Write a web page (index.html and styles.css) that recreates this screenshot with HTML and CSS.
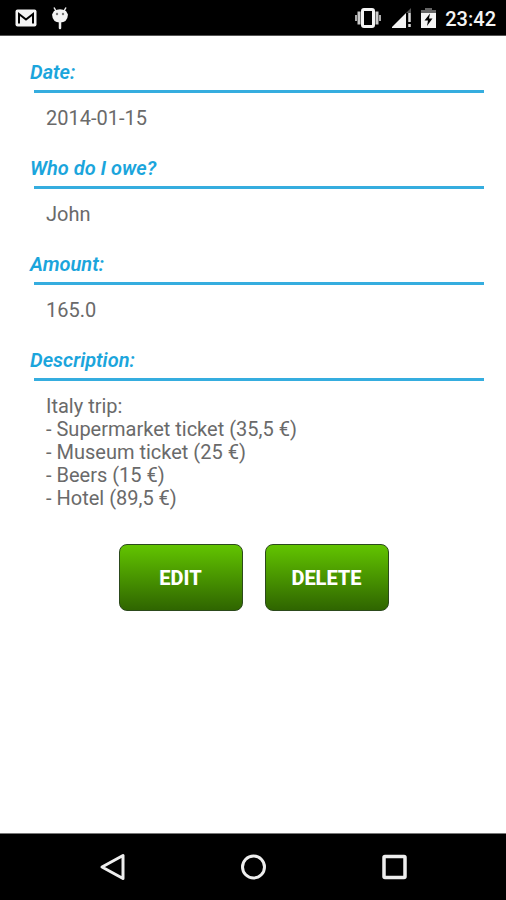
FILE: index.html
```html
<!DOCTYPE html>
<html lang="en">
<head>
<meta charset="utf-8">
<meta name="viewport" content="width=device-width, initial-scale=1">
<title>Debt details</title>
<link rel="stylesheet" href="styles.css">
</head>
<body>
<header class="status-bar">
  <div class="status-group notifications">
    <svg width="22" height="18" viewBox="0 0 22 18" aria-hidden="true">
      <rect x="0.5" y="0.5" width="21" height="17" rx="2" fill="#f4f4f4"/>
      <path d="M4 14.5V5L11 10.5L18 5V14.5" fill="none" stroke="#000" stroke-width="2"/>
    </svg>
    <svg width="18" height="24" viewBox="0 0 18 24" aria-hidden="true">
      <path d="M3 1.500L5 5M15 1.500L13 5" stroke="#eee" stroke-width="1.500"/>
      <path d="M3 5Q9 1.500 15 5L17 8.500Q16.500 16.500 9 16.500Q1.500 16.500 1 8.500Z" fill="#f4f4f4"/>
      <circle cx="6" cy="8" r="1.200" fill="#777"/><circle cx="12" cy="8" r="1.200" fill="#777"/>
      <path d="M9 15V22" stroke="#eee" stroke-width="2.500" stroke-linecap="round"/>
    </svg>
  </div>
  <div class="status-group system">
    <svg width="28" height="22" viewBox="0 0 28 22" aria-hidden="true">
      <rect x="7.500" y="2.500" width="11" height="17" rx="1.500" fill="#000" stroke="#f4f4f4" stroke-width="3"/>
      <path d="M4 4.500V17.500M22 4.500V17.500" stroke="#ccc" stroke-width="3"/>
      <path d="M1 8V14M25 8V14" stroke="#aaa" stroke-width="2"/>
    </svg>
    <svg width="20" height="20" viewBox="0 0 20 20" aria-hidden="true">
      <path d="M14 5V20H-1Z" fill="#f4f4f4"/>
      <path d="M19 0V5H14Z" fill="#555"/>
      <path d="M17.500 5V14M17.500 16V19" stroke="#ddd" stroke-width="2.500"/>
    </svg>
    <svg width="15" height="20" viewBox="0 0 15 20" aria-hidden="true">
      <path d="M0 2H4V0H11V2H15V6H0Z" fill="#666"/>
      <path d="M0 5H15V20H0Z" fill="#f4f4f4"/>
      <path d="M9 5.500L3.500 12.500H7L6 18L11.500 10.500H8Z" fill="#000"/>
    </svg>
    <time class="clock">23:42</time>
  </div>
</header>

<main class="content">
  <dl class="details">
    <dt>Date:</dt>
    <dd>2014-01-15</dd>
    <dt>Who do I owe?</dt>
    <dd>John</dd>
    <dt>Amount:</dt>
    <dd>165.0</dd>
    <dt>Description:</dt>
    <dd>Italy trip:<br>- Supermarket ticket (35,5 €)<br>- Museum ticket (25 €)<br>- Beers (15 €)<br>- Hotel (89,5 €)</dd>
  </dl>
  <div class="actions">
    <button type="button">EDIT</button>
    <button type="button">DELETE</button>
  </div>
</main>

<nav class="nav-bar">
  <button type="button" aria-label="Back">
    <svg width="28" height="28" viewBox="0 0 28 28"><path d="M25 2.500V25.500L4 14Z" fill="none" stroke="#eee" stroke-width="3" stroke-linejoin="round"/></svg>
  </button>
  <button type="button" aria-label="Home">
    <svg width="28" height="28" viewBox="0 0 28 28"><circle cx="14.500" cy="14" r="11" fill="none" stroke="#eee" stroke-width="3"/></svg>
  </button>
  <button type="button" aria-label="Recent apps">
    <svg width="28" height="28" viewBox="0 0 28 28"><rect x="4" y="3.500" width="21" height="21" rx="1" fill="none" stroke="#eee" stroke-width="3.500"/></svg>
  </button>
</nav>
</body>
</html>
```
FILE: styles.css
```css
* {
  box-sizing: border-box;
}

body {
  margin: 0;
  min-height: 100vh;
  display: flex;
  flex-direction: column;
  background: #fff;
  color: #6a6a6a;
  font-family: Roboto, "Liberation Sans", sans-serif;
  font-size: 20px;
  line-height: 23px;
}

svg {
  display: block;
}

.status-bar {
  height: 36px;
  padding: 1px 10px 0 15px;
  display: flex;
  align-items: center;
  justify-content: space-between;
  background: #000;
  border-bottom: 1px solid #555;
}

.status-group {
  display: flex;
  align-items: center;
}

.notifications {
  gap: 14px;
}

.system {
  gap: 9px;
}

.clock {
  padding-top: 2px;
  color: #f4f4f4;
  font-weight: 500;
}

.content {
  flex: 1;
  padding: 24px 22px 24px 30px;
}

.details {
  margin: 0;
}

.details dt {
  color: #1ba5dc;
  font-weight: 600;
  font-style: italic;
  line-height: 24px;
}

.details dt::after {
  content: "";
  display: block;
  height: 3px;
  margin: 6px 0 0 4px;
  background: #35addf;
}

.details dd {
  margin: 14px 0 26px 16px;
}

.actions {
  display: flex;
  justify-content: center;
  gap: 22px;
  margin: 34px 7px 0 0;
}

.actions button {
  width: 124px;
  height: 67px;
  padding: 0;
  border: 1px solid #2c4a1c;
  border-radius: 8px;
  background: linear-gradient(#62c400, #2f6500);
  color: #fff;
  font: 800 20px/24px Roboto, "Liberation Sans", sans-serif;
}

.nav-bar {
  height: 67px;
  padding: 0 42px;
  display: flex;
  background: #000;
  border-top: 1px solid #777;
}

.nav-bar button {
  flex: 1;
  display: flex;
  align-items: center;
  justify-content: center;
  padding: 0;
  border: 0;
  background: none;
}
```
